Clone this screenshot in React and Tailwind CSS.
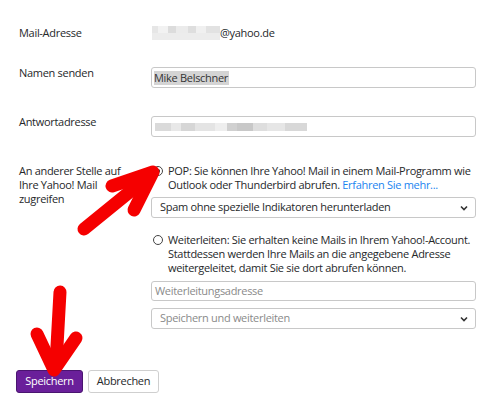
import React from "react";

const font = { fontFamily: '"Open Sans", "Noto Sans", Arial, sans-serif', letterSpacing: "-0.3px" };

function Chevron() {
  return (
    <svg width="8" height="6" viewBox="0 0 8 6" className="absolute right-[7px] top-1/2 -translate-y-1/2">
      <path d="M1 1.5 L4 4.5 L7 1.5" fill="none" stroke="#333" strokeWidth="1.6" />
    </svg>
  );
}

function Radio({ checked }) {
  return (
    <span className="mt-[2px] flex h-[10px] w-[10px] shrink-0 items-center justify-center rounded-full border border-[#444] bg-white">
      {checked && <span className="h-[4px] w-[4px] rounded-full bg-[#222]" />}
    </span>
  );
}

export default function App() {
  return (
    <div className="relative h-[400px] w-[486px] overflow-hidden bg-white text-[11px] text-[#26282a]" style={font}>
      <div className="flex flex-col pl-[19px] pr-[10px]">
        {/* Row 1 */}
        <div className="mt-[26px] flex leading-[14px]">
          <div className="w-[133px] shrink-0">Mail-Adresse</div>
          <div className="flex items-center">
            <span className="flex h-[14px] w-[68px] flex-wrap">
              <span className="h-[7px] w-[6px] bg-[#e6e6e6]" />
              <span className="h-[7px] w-[10px] bg-[#f2f2f2]" />
              <span className="h-[7px] w-[8px] bg-[#dcdcdc]" />
              <span className="h-[7px] w-[12px] bg-[#ebebeb]" />
              <span className="h-[7px] w-[8px] bg-[#dedede]" />
              <span className="h-[7px] w-[10px] bg-[#f0f0f0]" />
              <span className="h-[7px] w-[14px] bg-[#e2e2e2]" />
              <span className="h-[7px] w-[68px] bg-[#ececec]" />
            </span>
            <span>@yahoo.de</span>
          </div>
        </div>

        {/* Row 2 */}
        <div className="mt-[26px] flex leading-[14px]">
          <div className="w-[132px] shrink-0">Namen senden</div>
          <div className="mt-[1px] flex h-[21px] flex-1 items-center rounded-[3px] border border-[#c8c8c8] px-[2px]">
            <span className="bg-[#d4d4d4] pr-[1px] text-[#333]">Mike Belschner</span>
          </div>
        </div>

        {/* Row 3 */}
        <div className="mt-[27px] flex leading-[14px]">
          <div className="w-[132px] shrink-0">Antwortadresse</div>
          <div className="mt-[1px] flex h-[21px] flex-1 items-center rounded-[3px] border border-[#c8c8c8] px-[3px]">
            <span className="flex h-[8px] w-[152px]">
              <span className="h-full w-[16px] bg-[#dadada]" />
              <span className="h-full w-[10px] bg-[#e8e8e8]" />
              <span className="h-full w-[14px] bg-[#d6d6d6]" />
              <span className="h-full w-[20px] bg-[#e4e4e4]" />
              <span className="h-full w-[12px] bg-[#eeeeee]" />
              <span className="h-full w-[10px] bg-[#d0d0d0]" />
              <span className="h-full w-[16px] bg-[#c8c8c8]" />
              <span className="h-full w-[14px] bg-[#dedede]" />
              <span className="h-full w-[18px] bg-[#e6e6e6]" />
              <span className="h-full w-[22px] bg-[#d8d8d8]" />
            </span>
          </div>
        </div>

        {/* Row 4 */}
        <div className="mt-[27px] flex">
          <div className="w-[132px] shrink-0 leading-[14px]">
            An anderer Stelle auf
            <br />
            Ihre Yahoo! Mail
            <br />
            zugreifen
          </div>
          <div className="flex flex-1 flex-col">
            <div className="flex gap-[5px] pl-[2px] leading-[13.5px]">
              <Radio checked />
              <div className="whitespace-nowrap">
                POP: Sie können Ihre Yahoo! Mail in einem Mail-Programm wie
                <br />
                Outlook oder Thunderbird abrufen.{" "}
                <span className="text-[#1a84f0]">Erfahren Sie mehr...</span>
              </div>
            </div>
            <div className="relative mt-[6px] flex h-[21px] items-center rounded-[3px] border border-[#c8c8c8] pl-[8px]">
              Spam ohne spezielle Indikatoren herunterladen
              <Chevron />
            </div>

            <div className="mt-[15px] flex gap-[5px] pl-[2px] leading-[14px]">
              <Radio />
              <div className="whitespace-nowrap">
                Weiterleiten: Sie erhalten keine Mails in Ihrem Yahoo!-Account.
                <br />
                Stattdessen werden Ihre Mails an die angegebene Adresse
                <br />
                weitergeleitet, damit Sie sie dort abrufen können.
              </div>
            </div>
            <div className="mt-[6px] flex h-[20px] items-center rounded-[3px] border border-[#c8c8c8] pl-[3px] text-[#8a8a8a]">
              Weiterleitungsadresse
            </div>
            <div className="relative mt-[7px] flex h-[21px] items-center rounded-[3px] border border-[#c8c8c8] pl-[8px] text-[#8a8a8a]">
              Speichern und weiterleiten
              <Chevron />
            </div>
          </div>
        </div>

        {/* Buttons */}
        <div className="mt-[41px] flex gap-[5px]">
          <button className="-ml-[3px] h-[23px] w-[67px] rounded-[3px] border border-[#4a1570] bg-[#6a1f9a] text-white">
            Speichern
          </button>
          <button className="h-[23px] w-[71px] rounded-[3px] border border-[#cfcfcf] bg-white text-[#26282a]">
            Abbrechen
          </button>
        </div>
      </div>

      {/* Red arrows */}
      <svg className="pointer-events-none absolute left-0 top-0" width="486" height="400" viewBox="0 0 486 400">
        <g stroke="#f50000" strokeWidth="13" strokeLinecap="round" strokeLinejoin="round" fill="none">
          <path d="M84 229 L148 177" />
          <path d="M112 186 L153 172 L134 210" />
        </g>
        <g stroke="#f50000" strokeWidth="13" strokeLinecap="round" strokeLinejoin="round" fill="none">
          <path d="M60 292 L56 364" />
          <path d="M37 334 L54 370 L76 338" />
        </g>
      </svg>
    </div>
  );
}
